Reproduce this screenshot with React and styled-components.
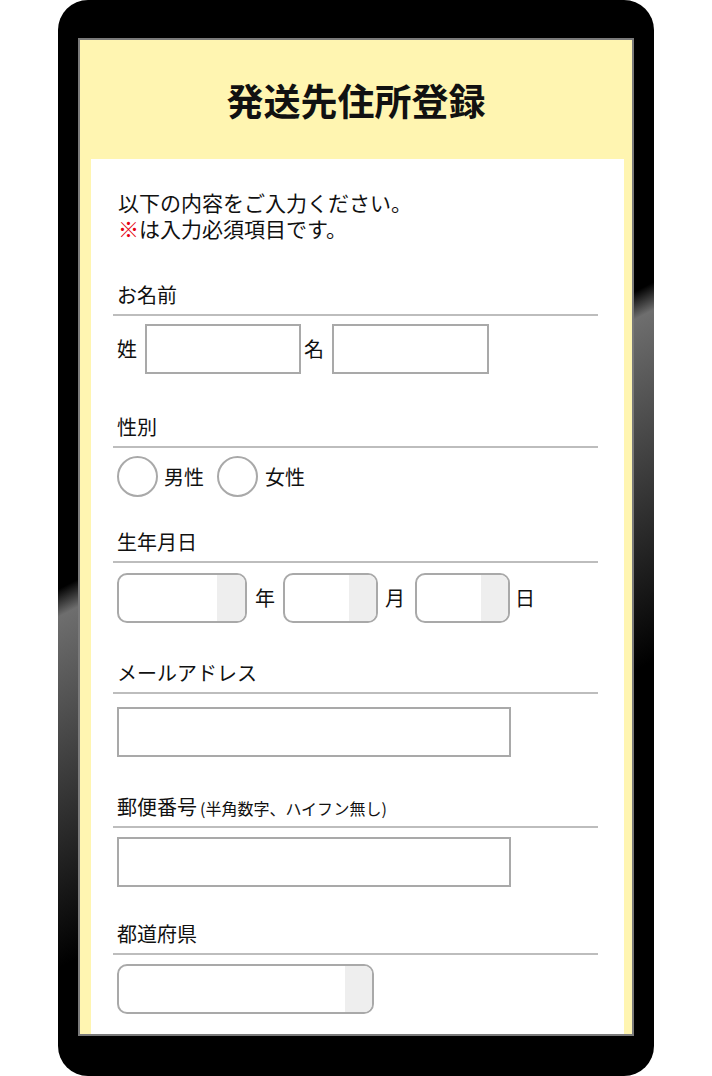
import React from "react";
import styled, { createGlobalStyle } from "styled-components";

const Global = createGlobalStyle`
  * { box-sizing: border-box; }
  html, body { margin: 0; padding: 0; background: #ffffff; }
  body {
    font-family: "Noto Sans CJK JP", "Noto Sans", sans-serif;
    color: #111111;
  }
`;

const Page = styled.div`
  width: 712px;
  height: 1076px;
  display: flex;
  justify-content: center;
  background: #ffffff;
`;

const Phone = styled.div`
  width: 596px;
  height: 1076px;
  border-radius: 30px;
  padding: 38px 20px 40px;
  display: flex;
  background: linear-gradient(
    152.7deg,
    #000000 0%,
    #000000 42.6%,
    #6e6e6e 44.6%,
    #000000 70%
  );
`;

const Screen = styled.div`
  flex: 1;
  border: 2px solid #7a7a7a;
  background: #fff5b1;
  display: flex;
  flex-direction: column;
  overflow: hidden;
`;

const Header = styled.header`
  padding: 41px 0 39px;
  text-align: center;
`;

const Title = styled.h1`
  margin: 0;
  font-size: 37px;
  line-height: 39px;
  font-weight: 700;
  color: #111;
`;

const Card = styled.main`
  flex: 1;
  background: #ffffff;
  margin: 0 8px 0 11px;
  padding: 30px 26px 0 22px;
`;

const Intro = styled.div`
  padding-left: 5px;
  font-size: 21px;
`;

const IntroLine = styled.p`
  margin: 0;
  height: 26px;
  line-height: 26px;
`;

const Mark = styled.span`
  color: #e60012;
`;

const Section = styled.section`
  margin-top: ${(p) => p.$top}px;
`;

const Label = styled.div`
  height: 35px;
  font-size: 20px;
  line-height: 28px;
  padding: 0 0 5px 4px;
  border-bottom: 2px solid #bdbdbd;
  white-space: nowrap;
`;

const Note = styled.span`
  font-size: 16px;
  line-height: 1;
  margin-left: 3px;
`;

const FieldRow = styled.div`
  display: flex;
  align-items: center;
  margin-top: ${(p) => p.$top}px;
  padding-left: 4px;
`;

const Word = styled.span`
  font-size: 20px;
  line-height: 28px;
  margin-left: ${(p) => p.$ml || 0}px;
  margin-right: ${(p) => p.$mr || 0}px;
`;

const TextBox = styled.input`
  width: ${(p) => p.$w}px;
  height: 50px;
  padding: 0 8px;
  margin: 0;
  border: 2px solid #a9a9a9;
  border-radius: 0;
  background: #ffffff;
  outline: none;
  font-family: inherit;
  font-size: 18px;
`;

const Radio = styled.span`
  display: inline-block;
  width: 41px;
  height: 41px;
  border: 2px solid #a9a9a9;
  border-radius: 50%;
  background: #ffffff;
  margin-left: ${(p) => p.$ml || 0}px;
`;

const SelectBox = styled.div`
  width: ${(p) => p.$w}px;
  height: 50px;
  border: 2px solid #a9a9a9;
  border-radius: 10px;
  overflow: hidden;
  display: flex;
  background: #ffffff;
`;

const SelectValue = styled.div`
  flex: 1;
`;

const SelectArrow = styled.div`
  width: ${(p) => p.$w || 28}px;
  background: #eeeeee;
`;

function Select({ w, arrow }) {
  return (
    <SelectBox $w={w}>
      <SelectValue />
      <SelectArrow $w={arrow} />
    </SelectBox>
  );
}

export default function App() {
  return (
    <>
      <Global />
      <Page>
        <Phone>
          <Screen>
            <Header>
              <Title>発送先住所登録</Title>
            </Header>
            <Card>
              <Intro>
                <IntroLine>以下の内容をご入力ください。</IntroLine>
                <IntroLine>
                  <Mark>※</Mark>は入力必須項目です。
                </IntroLine>
              </Intro>

              <Section $top={40}>
                <Label>お名前</Label>
                <FieldRow $top={8}>
                  <Word $mr={8}>姓</Word>
                  <TextBox $w={156} />
                  <Word $ml={3} $mr={8}>名</Word>
                  <TextBox $w={157} />
                </FieldRow>
              </Section>

              <Section $top={39}>
                <Label>性別</Label>
                <FieldRow $top={8}>
                  <Radio />
                  <Word $ml={6}>男性</Word>
                  <Radio $ml={13} />
                  <Word $ml={7}>女性</Word>
                </FieldRow>
              </Section>

              <Section $top={31}>
                <Label>生年月日</Label>
                <FieldRow $top={10}>
                  <Select w={130} arrow={28} />
                  <Word $ml={8} $mr={8}>年</Word>
                  <Select w={95} arrow={27} />
                  <Word $ml={7} $mr={10}>月</Word>
                  <Select w={95} arrow={27} />
                  <Word $ml={5}>日</Word>
                </FieldRow>
              </Section>

              <Section $top={36}>
                <Label>メールアドレス</Label>
                <FieldRow $top={13}>
                  <TextBox $w={394} />
                </FieldRow>
              </Section>

              <Section $top={36}>
                <Label>
                  郵便番号<Note>(半角数字、ハイフン無し)</Note>
                </Label>
                <FieldRow $top={9}>
                  <TextBox $w={394} />
                </FieldRow>
              </Section>

              <Section $top={33}>
                <Label>都道府県</Label>
                <FieldRow $top={9}>
                  <Select w={257} arrow={27} />
                </FieldRow>
              </Section>
            </Card>
          </Screen>
        </Phone>
      </Page>
    </>
  );
}
